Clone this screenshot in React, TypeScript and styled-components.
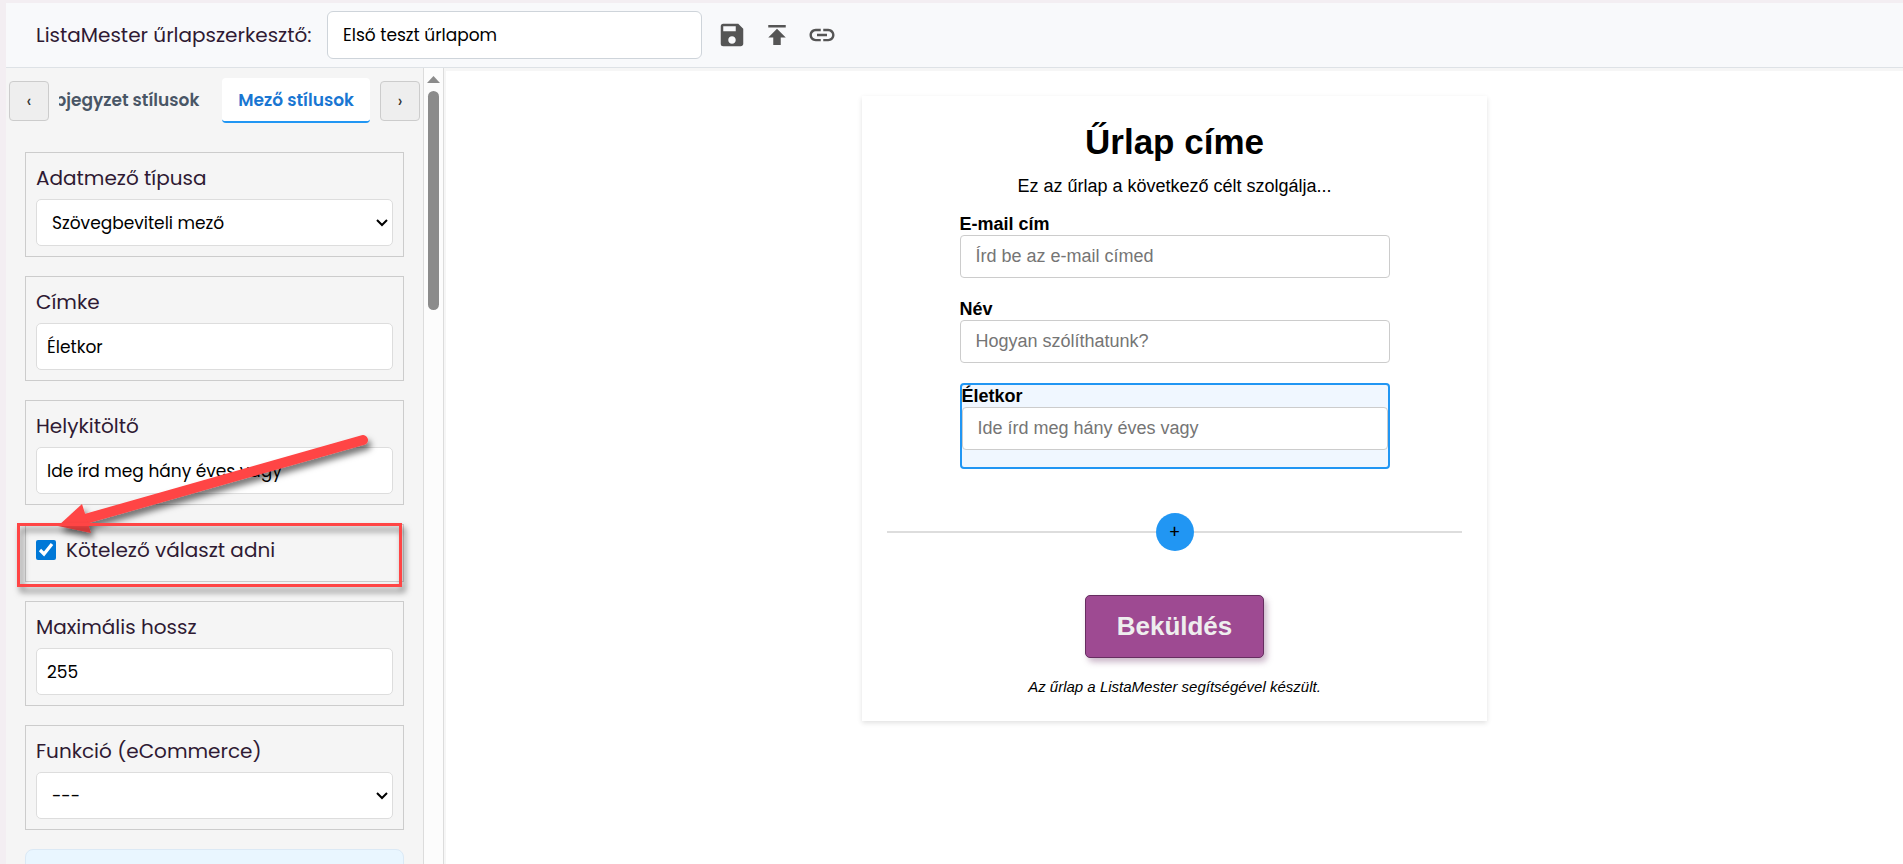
import React from 'react';
import styled, { createGlobalStyle, css } from 'styled-components';
import { MdSave, MdPublish, MdLink } from 'react-icons/md';

const uiFont = `Poppins, Inter, "Noto Sans", sans-serif`;
const formFont = `Arial, "Liberation Sans", sans-serif`;

const GlobalStyle = createGlobalStyle`
  *, *::before, *::after { box-sizing: border-box; }
  body {
    margin: 0;
    background: #f3eef2;
    font-family: ${uiFont};
    color: #2f1a33;
    overflow: hidden;
  }
`;

const Editor = styled.div`
  display: flex;
  flex-direction: column;
  height: 100vh;
  padding: 3px 0 0 6px;
`;

const Header = styled.header`
  display: flex;
  align-items: center;
  flex: none;
  height: 65px;
  padding: 0 30px;
  background: #f8f9fb;
  border-bottom: 1px solid #dee2e6;
`;

const HeaderLabel = styled.label`
  width: 291px;
  font-size: 20px;
  line-height: 30px;
  white-space: nowrap;
`;

const TitleInput = styled.input`
  width: 375px;
  height: 48px;
  padding: 0 15px;
  border: 1px solid #ced4da;
  border-radius: 6px;
  background: #fff;
  color: #000;
  font-family: ${uiFont};
  font-size: 17px;
`;

const Tools = styled.div`
  display: flex;
  gap: 15px;
  margin-left: 15px;
`;

const ToolButton = styled.button`
  display: flex;
  padding: 0;
  border: 0;
  background: none;
  color: #555;
  font-size: 30px;
`;

const Body = styled.div`
  display: flex;
  flex: 1;
  min-height: 0;
`;

const Sidebar = styled.aside`
  display: flex;
  flex: none;
  width: 438px;
  background: #f5f5f5;
  border-right: 1px solid #dcdcdc;
`;

const SidebarContent = styled.div`
  flex: 1;
  min-width: 0;
  overflow: hidden;
`;

const ScrollTrack = styled.div`
  display: flex;
  flex-direction: column;
  align-items: center;
  gap: 8px;
  flex: none;
  width: 20px;
  padding-top: 8px;
  background: #fcfcfc;
  border-left: 1px solid #dcdcdc;
`;

const ScrollThumb = styled.div`
  width: 11px;
  height: 219px;
  border-radius: 6px;
  background: #8b8b8b;
`;

const TabBar = styled.nav`
  display: flex;
  align-items: center;
  gap: 10px;
  padding: 10px 3px 0;
`;

const TabArrow = styled.button`
  flex: none;
  width: 40px;
  height: 40px;
  padding: 0;
  border: 1px solid #ccc;
  border-radius: 4px;
  background: #eee;
  color: #333;
  font-family: ${uiFont};
  font-size: 18px;
`;

const TabList = styled.div`
  display: flex;
  flex: 1;
  justify-content: flex-end;
  gap: 7px;
  min-width: 0;
  overflow: hidden;
`;

const Tab = styled.button<{ $active?: boolean }>`
  flex: none;
  height: 45px;
  padding: 0 16px;
  border: 0;
  border-bottom: 2px solid ${p => (p.$active ? '#2196f3' : 'transparent')};
  border-radius: 4px;
  background: ${p => (p.$active ? '#fff' : 'transparent')};
  color: ${p => (p.$active ? '#1976d2' : '#495666')};
  font-family: ${uiFont};
  font-size: 17px;
  font-weight: 600;
  white-space: nowrap;
`;

const Settings = styled.div`
  display: flex;
  flex-direction: column;
  gap: 19px;
  padding: 29px 19px 0;
`;

const Group = styled.div`
  display: flex;
  flex-direction: column;
  flex: none;
  gap: 6px;
  padding: 10px;
  border: 1px solid #ccc;
`;

const GroupLabel = styled.label`
  font-size: 20px;
  line-height: 30px;
`;

const control = css`
  width: 100%;
  height: 47px;
  padding: 0 10px;
  border: 1px solid #ddd;
  border-radius: 5px;
  background: #fff;
  color: #000;
  font-family: ${uiFont};
  font-size: 17px;
`;

const TextInput = styled.input`${control}`;

const SelectWrap = styled.div`
  display: grid;
  align-items: center;
  > * { grid-area: 1 / 1; }
  > svg {
    justify-self: end;
    margin-right: 4px;
    pointer-events: none;
  }
`;

const Select = styled.select`
  ${control}
  padding: 0 15px;
  appearance: none;
`;

const CheckGroup = styled(Group)`
  height: 58px;
`;

const CheckLabel = styled.label`
  display: flex;
  align-items: center;
  gap: 10px;
  font-size: 20px;
  line-height: 30px;
`;

const Checkbox = styled.input`
  width: 20px;
  height: 20px;
  margin: 0;
  accent-color: #0078d7;
`;

const InfoBox = styled.div`
  flex: none;
  height: 80px;
  border: 1px solid #dbe9f5;
  border-radius: 8px;
  background: #e9f6ff;
`;

const Canvas = styled.main`
  flex: 1;
  min-width: 0;
  padding-top: 25px;
  background: #fff;
  border: solid #f6f6f6;
  border-width: 3px 0 0 2px;
`;

const FormCard = styled.form`
  display: flex;
  flex-direction: column;
  align-items: center;
  width: 625px;
  max-width: 100%;
  margin: 0 auto;
  padding: 20px 25px 25px;
  background: #fff;
  box-shadow: 0 2px 5px rgba(0, 0, 0, 0.12);
  color: #000;
  font-family: ${formFont};
`;

const FormTitle = styled.h1`
  margin: 5px 0 12px;
  font-size: 35px;
  line-height: 42px;
`;

const Intro = styled.p`
  margin: 0 0 16px;
  font-size: 18px;
  line-height: 22px;
`;

const Fields = styled.div`
  display: flex;
  flex-direction: column;
  width: 430px;
`;

const Field = styled.div<{ $selected?: boolean }>`
  display: flex;
  flex-direction: column;
  height: 85px;
  ${p => p.$selected && css`
    height: 86px;
    border: 2px solid #2196f3;
    border-radius: 4px;
    background: #f0f7ff;
  `}
`;

const FieldLabel = styled.label`
  font-size: 18px;
  font-weight: 700;
  line-height: 22px;
`;

const FieldInput = styled.input`
  width: 100%;
  height: 43px;
  padding: 0 15px;
  border: 1px solid #ccc;
  border-radius: 4px;
  background: #fff;
  font-family: ${formFont};
  font-size: 18px;
  &::placeholder { color: #757575; }
`;

const AddRow = styled.div`
  display: flex;
  align-items: center;
  width: 100%;
  margin: 44px 0;
  &::before, &::after {
    content: '';
    flex: 1;
    height: 2px;
    background: #ddd;
  }
`;

const AddButton = styled.button`
  width: 38px;
  height: 38px;
  padding: 0;
  border: 0;
  border-radius: 50%;
  background: #2196f3;
  color: #000;
  font-family: ${uiFont};
  font-size: 17px;
`;

const SubmitButton = styled.button`
  height: 63px;
  padding: 0 31px;
  border: 1px solid #662d60;
  border-radius: 5px;
  background: #9e4a92;
  box-shadow: 3px 4px 6px rgba(102, 45, 96, 0.35);
  color: #eee;
  font-family: ${formFont};
  font-size: 26px;
  font-weight: 700;
`;

const Credit = styled.p`
  margin: 20px 0 0;
  font-size: 15px;
  font-style: italic;
  line-height: 18px;
`;

const Annotation = styled.svg`
  position: absolute;
  left: 0;
  top: 0;
  pointer-events: none;
`;

const Chevron = () => (
  <svg width="14" height="10" viewBox="0 0 14 10" fill="none" stroke="#000" strokeWidth="2">
    <path d="M2 2l5 5 5-5" />
  </svg>
);

const App = () => (
  <Editor>
    <GlobalStyle />
    <Header>
      <HeaderLabel htmlFor="form-name">ListaMester űrlapszerkesztő:</HeaderLabel>
      <TitleInput id="form-name" defaultValue="Első teszt űrlapom" />
      <Tools>
        <ToolButton aria-label="Mentés"><MdSave /></ToolButton>
        <ToolButton aria-label="Közzététel"><MdPublish /></ToolButton>
        <ToolButton aria-label="Hivatkozás"><MdLink /></ToolButton>
      </Tools>
    </Header>
    <Body>
      <Sidebar>
        <SidebarContent>
          <TabBar>
            <TabArrow>‹</TabArrow>
            <TabList>
              <Tab>Lábjegyzet stílusok</Tab>
              <Tab $active>Mező stílusok</Tab>
            </TabList>
            <TabArrow>›</TabArrow>
          </TabBar>
          <Settings>
            <Group>
              <GroupLabel htmlFor="field-type">Adatmező típusa</GroupLabel>
              <SelectWrap>
                <Select id="field-type"><option>Szövegbeviteli mező</option></Select>
                <Chevron />
              </SelectWrap>
            </Group>
            <Group>
              <GroupLabel htmlFor="field-label">Címke</GroupLabel>
              <TextInput id="field-label" defaultValue="Életkor" />
            </Group>
            <Group>
              <GroupLabel htmlFor="field-placeholder">Helykitöltő</GroupLabel>
              <TextInput id="field-placeholder" defaultValue="Ide írd meg hány éves vagy" />
            </Group>
            <CheckGroup>
              <CheckLabel>
                <Checkbox type="checkbox" defaultChecked />
                Kötelező választ adni
              </CheckLabel>
            </CheckGroup>
            <Group>
              <GroupLabel htmlFor="field-max">Maximális hossz</GroupLabel>
              <TextInput id="field-max" defaultValue="255" />
            </Group>
            <Group>
              <GroupLabel htmlFor="field-function">Funkció (eCommerce)</GroupLabel>
              <SelectWrap>
                <Select id="field-function"><option>---</option></Select>
                <Chevron />
              </SelectWrap>
            </Group>
            <InfoBox />
          </Settings>
        </SidebarContent>
        <ScrollTrack>
          <svg width="13" height="7" viewBox="0 0 13 7"><path d="M0 7L6.500 0L13 7z" fill="#8b8b8b" /></svg>
          <ScrollThumb />
        </ScrollTrack>
      </Sidebar>
      <Canvas>
        <FormCard onSubmit={e => e.preventDefault()}>
          <FormTitle>Űrlap címe</FormTitle>
          <Intro>Ez az űrlap a következő célt szolgálja...</Intro>
          <Fields>
            <Field>
              <FieldLabel htmlFor="email">E-mail cím</FieldLabel>
              <FieldInput id="email" placeholder="Írd be az e-mail címed" />
            </Field>
            <Field>
              <FieldLabel htmlFor="name">Név</FieldLabel>
              <FieldInput id="name" placeholder="Hogyan szólíthatunk?" />
            </Field>
            <Field $selected>
              <FieldLabel htmlFor="age">Életkor</FieldLabel>
              <FieldInput id="age" placeholder="Ide írd meg hány éves vagy" />
            </Field>
          </Fields>
          <AddRow><AddButton type="button">+</AddButton></AddRow>
          <SubmitButton>Beküldés</SubmitButton>
          <Credit>Az űrlap a ListaMester segítségével készült.</Credit>
        </FormCard>
      </Canvas>
    </Body>
    <Annotation width="430" height="610" viewBox="0 0 430 610" aria-hidden="true">
      <defs>
        <filter id="drop" x="-10%" y="-20%" width="120%" height="150%">
          <feDropShadow dx="3" dy="5" stdDeviation="3" floodColor="#000" floodOpacity="0.55" />
        </filter>
      </defs>
      <g filter="url(#drop)" fill="#ff4444">
        <path d="M363 440L85 519" stroke="#ff4444" strokeWidth="10" strokeLinecap="round" />
        <path d="M58 526L82 504L91 533z" />
      </g>
      <rect x="18.500" y="524.500" width="382" height="61" fill="none" stroke="#ff4444" strokeWidth="3" filter="url(#drop)" />
    </Annotation>
  </Editor>
);

export default App;
